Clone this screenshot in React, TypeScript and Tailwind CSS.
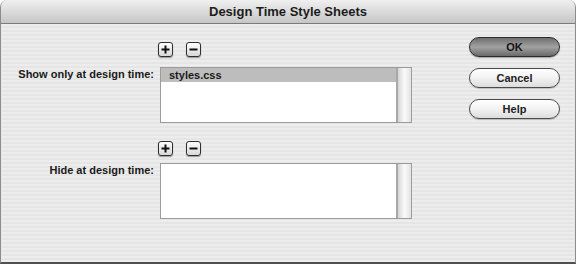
import React from "react";

const stripes =
  "bg-[repeating-linear-gradient(180deg,#ededed_0px,#ededed_2px,#e5e5e5_2px,#e5e5e5_4px)]";

function SmallBtn({ kind }: { kind: "plus" | "minus" }) {
  return (
    <div className="w-[15px] h-[15px] rounded-[3px] border-[1.5px] border-[#2e2e2e] bg-gradient-to-b from-[#ffffff] to-[#d8d8d8] shadow-[0_1px_1px_rgba(0,0,0,0.35)] flex items-center justify-center">
      <svg width="9" height="9" viewBox="0 0 9 9">
        <rect x="0.5" y="3.5" width="8" height="2" fill="#111" />
        {kind === "plus" && <rect x="3.5" y="0.5" width="2" height="8" fill="#111" />}
      </svg>
    </div>
  );
}

function ListBox({ items, selected }: { items: string[]; selected?: number }) {
  return (
    <div className="w-[252px] h-[56px] border border-[#9c9c9c] bg-white flex">
      <div className="flex-1 flex flex-col">
        {items.map((it, i) => (
          <div
            key={it}
            className={
              "h-[14px] pl-[8px] text-[11px] font-bold leading-[14px] text-[#1a1a1a] " +
              (i === selected ? "bg-[#bdbdbd]" : "")
            }
          >
            {it}
          </div>
        ))}
      </div>
      <div className="w-[15px] h-full border-l-[2px] border-[#a8a8a8] bg-gradient-to-r from-[#d6d6d6] via-[#fafafa] to-[#e2e2e2]" />
    </div>
  );
}

function PillBtn({ label, primary }: { label: string; primary?: boolean }) {
  return (
    <div
      className={
        "w-[91px] h-[20px] rounded-full flex items-center justify-center text-[11px] font-bold " +
        (primary
          ? "border-[1.5px] border-[#2a2a2a] bg-gradient-to-b from-[#6e6e6e] via-[#a2a2a2] to-[#6a6a6a] text-[#141414] shadow-[0_1px_1px_rgba(0,0,0,0.3)]"
          : "border-[1.5px] border-[#4a4a4a] bg-gradient-to-b from-[#ffffff] via-[#f2f2f2] to-[#dcdcdc] text-[#222] shadow-[0_1px_1px_rgba(0,0,0,0.2)]")
      }
    >
      {label}
    </div>
  );
}

export default function App() {
  return (
    <div
      className="w-[576px] h-[264px] flex flex-col overflow-hidden rounded-t-[7px] border-x border-[#8c8c8c] border-b-2 border-b-[#505050] bg-[#e8e8e8]"
      style={{ fontFamily: '"Liberation Sans", Arial, sans-serif' }}
    >
      <div className="h-[24px] shrink-0 flex items-center justify-center bg-gradient-to-b from-[#f0f0f0] to-[#c6c6c6] border-b border-[#7a7a7a] text-[13px] font-bold text-[#1c1c1c]">
        Design Time Style Sheets
      </div>
      <div className={"flex-1 flex " + stripes}>
        <div className="flex flex-col pt-[18px]">
          <div className="flex">
            <div className="w-[157px]" />
            <div className="flex gap-[13px]">
              <SmallBtn kind="plus" />
              <SmallBtn kind="minus" />
            </div>
          </div>
          <div className="flex mt-[10px]">
            <div className="w-[159px] pr-[6px] text-right text-[11px] font-bold leading-[14px] text-[#1a1a1a]">
              Show only at design time:
            </div>
            <ListBox items={["styles.css"]} selected={0} />
          </div>
          <div className="flex mt-[18px]">
            <div className="w-[157px]" />
            <div className="flex gap-[13px]">
              <SmallBtn kind="plus" />
              <SmallBtn kind="minus" />
            </div>
          </div>
          <div className="flex mt-[7px]">
            <div className="w-[159px] pr-[6px] text-right text-[11px] font-bold leading-[14px] text-[#1a1a1a]">
              Hide at design time:
            </div>
            <ListBox items={[]} />
          </div>
        </div>
        <div className="flex flex-col gap-[11px] pt-[13px] pl-[57px]">
          <PillBtn label="OK" primary />
          <PillBtn label="Cancel" />
          <PillBtn label="Help" />
        </div>
      </div>
    </div>
  );
}
